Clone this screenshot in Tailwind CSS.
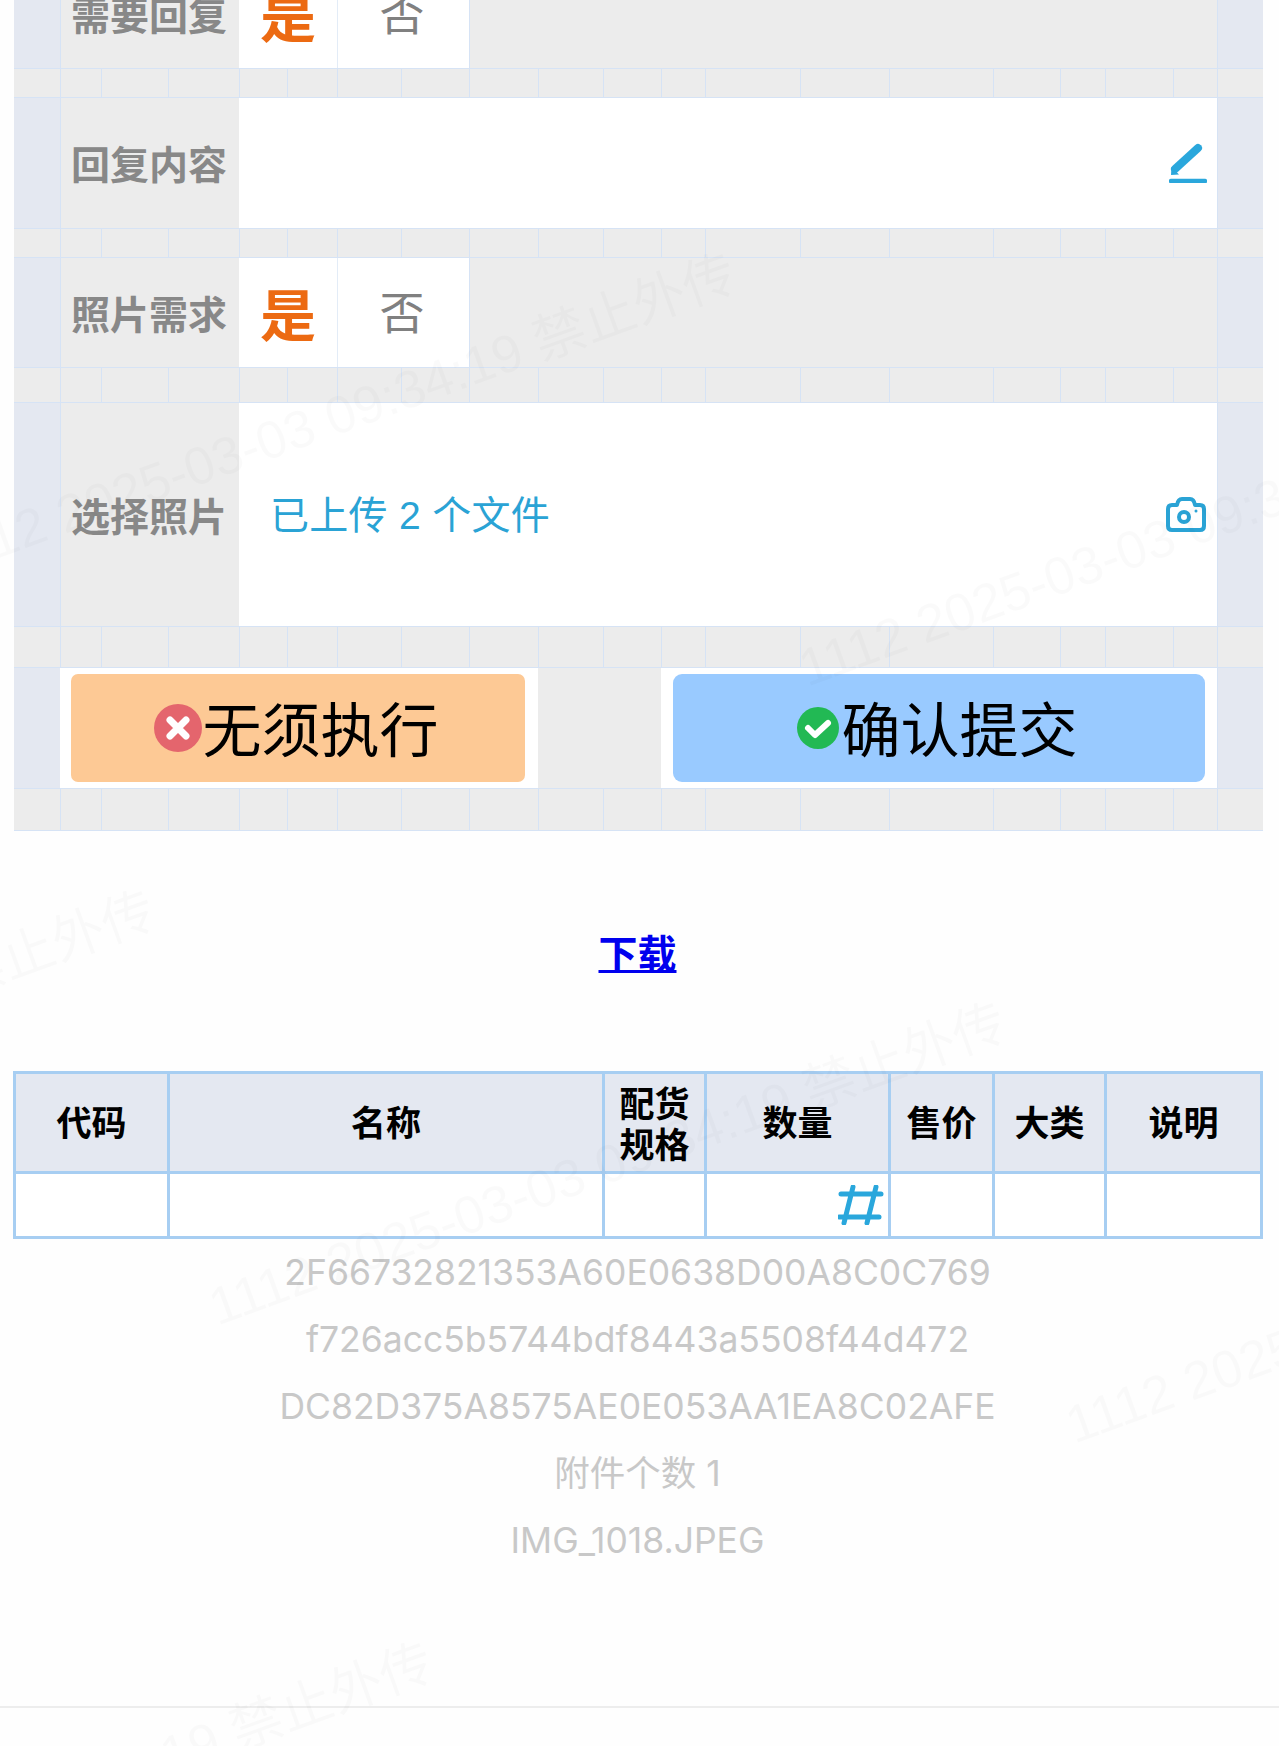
<!DOCTYPE html>
<html lang="zh-CN">
<head>
<meta charset="utf-8">
<title>表单</title>
<script src="https://cdn.jsdelivr.net/npm/@tailwindcss/browser@4"></script>
</head>
<body class="bg-[#fefefe] font-['Liberation_Sans','Noto_Sans_CJK_SC',sans-serif]">
<div class="relative w-[1279px] h-[1746px] overflow-hidden">

  <!-- form grid -->
  <div class="ml-[14px] -mt-[41px] w-[1249px] grid grid-cols-[46px_41px_67px_71px_48px_50px_64px_68px_69px_65px_58px_44px_95px_89px_104px_67px_45px_68px_44px_46px] grid-rows-[109px_30px_130px_30px_109px_36px_223px_42px_120px_43px]">

    <!-- row: 需要回复 -->
    <div class="bg-[#e4e8f1]"></div>
    <div class="col-span-3 bg-[#ececec] border-l border-[#d6e3f5] flex items-center justify-center pt-[7px] pr-[2px] text-[39px] font-bold text-[#888888]">需要回复</div>
    <div class="col-span-2 bg-white flex items-center justify-center pt-[8px] text-[56px] font-bold text-[#ec6a12]">是</div>
    <div class="col-span-2 bg-white border-l border-[#e3ecf7] flex items-center justify-center pt-[4px] pr-[3px] text-[45px] text-[#808080]">否</div>
    <div class="col-span-11 bg-[#ececec] border-l border-[#d6e3f5]"></div>
    <div class="bg-[#e4e8f1] border-l border-[#d6e3f5]"></div>

    <!-- spacer row -->
    <div class="bg-[#ececec] border-y border-[#d6e3f5]"></div>
    <div class="bg-[#ececec] border-y border-l border-[#d6e3f5]"></div>
    <div class="bg-[#ececec] border-y border-l border-[#d6e3f5]"></div>
    <div class="bg-[#ececec] border-y border-l border-[#d6e3f5]"></div>
    <div class="bg-[#ececec] border-y border-l border-[#d6e3f5]"></div>
    <div class="bg-[#ececec] border-y border-l border-[#d6e3f5]"></div>
    <div class="bg-[#ececec] border-y border-l border-[#d6e3f5]"></div>
    <div class="bg-[#ececec] border-y border-l border-[#d6e3f5]"></div>
    <div class="bg-[#ececec] border-y border-l border-[#d6e3f5]"></div>
    <div class="bg-[#ececec] border-y border-l border-[#d6e3f5]"></div>
    <div class="bg-[#ececec] border-y border-l border-[#d6e3f5]"></div>
    <div class="bg-[#ececec] border-y border-l border-[#d6e3f5]"></div>
    <div class="bg-[#ececec] border-y border-l border-[#d6e3f5]"></div>
    <div class="bg-[#ececec] border-y border-l border-[#d6e3f5]"></div>
    <div class="bg-[#ececec] border-y border-l border-[#d6e3f5]"></div>
    <div class="bg-[#ececec] border-y border-l border-[#d6e3f5]"></div>
    <div class="bg-[#ececec] border-y border-l border-[#d6e3f5]"></div>
    <div class="bg-[#ececec] border-y border-l border-[#d6e3f5]"></div>
    <div class="bg-[#ececec] border-y border-l border-[#d6e3f5]"></div>
    <div class="bg-[#ececec] border-y border-l border-[#d6e3f5]"></div>

    <!-- row: 回复内容 -->
    <div class="bg-[#e4e8f1]"></div>
    <div class="col-span-3 bg-[#ececec] border-l border-[#d6e3f5] flex items-center justify-center pt-[7px] pr-[2px] text-[39px] font-bold text-[#888888]">回复内容</div>
    <div class="col-span-15 bg-white flex items-center justify-end pr-[10px]">
      <svg class="w-[38px] h-[40px]" viewBox="0 0 38 40" fill="none">
        <path d="M29 5L6 26" stroke="#2aa7dc" stroke-width="8" stroke-linecap="round"/>
        <path d="M2.500 24L10 31.500L2 32Z" fill="#2aa7dc"/>
        <path d="M2 38H36" stroke="#2aa7dc" stroke-width="4.500" stroke-linecap="round"/>
      </svg>
    </div>
    <div class="bg-[#e4e8f1] border-l border-[#d6e3f5]"></div>

    <!-- spacer row -->
    <div class="bg-[#ececec] border-y border-[#d6e3f5]"></div>
    <div class="bg-[#ececec] border-y border-l border-[#d6e3f5]"></div>
    <div class="bg-[#ececec] border-y border-l border-[#d6e3f5]"></div>
    <div class="bg-[#ececec] border-y border-l border-[#d6e3f5]"></div>
    <div class="bg-[#ececec] border-y border-l border-[#d6e3f5]"></div>
    <div class="bg-[#ececec] border-y border-l border-[#d6e3f5]"></div>
    <div class="bg-[#ececec] border-y border-l border-[#d6e3f5]"></div>
    <div class="bg-[#ececec] border-y border-l border-[#d6e3f5]"></div>
    <div class="bg-[#ececec] border-y border-l border-[#d6e3f5]"></div>
    <div class="bg-[#ececec] border-y border-l border-[#d6e3f5]"></div>
    <div class="bg-[#ececec] border-y border-l border-[#d6e3f5]"></div>
    <div class="bg-[#ececec] border-y border-l border-[#d6e3f5]"></div>
    <div class="bg-[#ececec] border-y border-l border-[#d6e3f5]"></div>
    <div class="bg-[#ececec] border-y border-l border-[#d6e3f5]"></div>
    <div class="bg-[#ececec] border-y border-l border-[#d6e3f5]"></div>
    <div class="bg-[#ececec] border-y border-l border-[#d6e3f5]"></div>
    <div class="bg-[#ececec] border-y border-l border-[#d6e3f5]"></div>
    <div class="bg-[#ececec] border-y border-l border-[#d6e3f5]"></div>
    <div class="bg-[#ececec] border-y border-l border-[#d6e3f5]"></div>
    <div class="bg-[#ececec] border-y border-l border-[#d6e3f5]"></div>

    <!-- row: 照片需求 -->
    <div class="bg-[#e4e8f1]"></div>
    <div class="col-span-3 bg-[#ececec] border-l border-[#d6e3f5] flex items-center justify-center pt-[7px] pr-[2px] text-[39px] font-bold text-[#888888]">照片需求</div>
    <div class="col-span-2 bg-white flex items-center justify-center pt-[8px] text-[56px] font-bold text-[#ec6a12]">是</div>
    <div class="col-span-2 bg-white border-l border-[#e3ecf7] flex items-center justify-center pt-[4px] pr-[3px] text-[45px] text-[#808080]">否</div>
    <div class="col-span-11 bg-[#ececec] border-l border-[#d6e3f5]"></div>
    <div class="bg-[#e4e8f1] border-l border-[#d6e3f5]"></div>

    <!-- spacer row -->
    <div class="bg-[#ececec] border-y border-[#d6e3f5]"></div>
    <div class="bg-[#ececec] border-y border-l border-[#d6e3f5]"></div>
    <div class="bg-[#ececec] border-y border-l border-[#d6e3f5]"></div>
    <div class="bg-[#ececec] border-y border-l border-[#d6e3f5]"></div>
    <div class="bg-[#ececec] border-y border-l border-[#d6e3f5]"></div>
    <div class="bg-[#ececec] border-y border-l border-[#d6e3f5]"></div>
    <div class="bg-[#ececec] border-y border-l border-[#d6e3f5]"></div>
    <div class="bg-[#ececec] border-y border-l border-[#d6e3f5]"></div>
    <div class="bg-[#ececec] border-y border-l border-[#d6e3f5]"></div>
    <div class="bg-[#ececec] border-y border-l border-[#d6e3f5]"></div>
    <div class="bg-[#ececec] border-y border-l border-[#d6e3f5]"></div>
    <div class="bg-[#ececec] border-y border-l border-[#d6e3f5]"></div>
    <div class="bg-[#ececec] border-y border-l border-[#d6e3f5]"></div>
    <div class="bg-[#ececec] border-y border-l border-[#d6e3f5]"></div>
    <div class="bg-[#ececec] border-y border-l border-[#d6e3f5]"></div>
    <div class="bg-[#ececec] border-y border-l border-[#d6e3f5]"></div>
    <div class="bg-[#ececec] border-y border-l border-[#d6e3f5]"></div>
    <div class="bg-[#ececec] border-y border-l border-[#d6e3f5]"></div>
    <div class="bg-[#ececec] border-y border-l border-[#d6e3f5]"></div>
    <div class="bg-[#ececec] border-y border-l border-[#d6e3f5]"></div>

    <!-- row: 选择照片 -->
    <div class="bg-[#e4e8f1]"></div>
    <div class="col-span-3 bg-[#ececec] border-l border-[#d6e3f5] flex items-center justify-center pt-[7px] pr-[2px] text-[39px] font-bold text-[#888888]">选择照片</div>
    <div class="col-span-15 bg-white flex items-center justify-between pl-[31px] pr-[11px]">
      <span class="pt-[4px] text-[39px] tracking-[0.3px] text-[#2aa3d5]">已上传 2 个文件</span>
      <svg class="w-[40px] h-[35px]" viewBox="0 0 40 35" fill="none" stroke="#2aa3d5" stroke-width="4">
        <path d="M6 8h5q1-6 5-6h8q4 0 5 6h5q4 0 4 4v17q0 4-4 4H6q-4 0-4-4V12q0-4 4-4z" stroke-linejoin="round"/>
        <circle cx="18" cy="20" r="5"/>
        <circle cx="30" cy="14" r="1.500" fill="#2aa3d5" stroke="none"/>
      </svg>
    </div>
    <div class="bg-[#e4e8f1] border-l border-[#d6e3f5]"></div>

    <!-- spacer row -->
    <div class="bg-[#ececec] border-y border-[#d6e3f5]"></div>
    <div class="bg-[#ececec] border-y border-l border-[#d6e3f5]"></div>
    <div class="bg-[#ececec] border-y border-l border-[#d6e3f5]"></div>
    <div class="bg-[#ececec] border-y border-l border-[#d6e3f5]"></div>
    <div class="bg-[#ececec] border-y border-l border-[#d6e3f5]"></div>
    <div class="bg-[#ececec] border-y border-l border-[#d6e3f5]"></div>
    <div class="bg-[#ececec] border-y border-l border-[#d6e3f5]"></div>
    <div class="bg-[#ececec] border-y border-l border-[#d6e3f5]"></div>
    <div class="bg-[#ececec] border-y border-l border-[#d6e3f5]"></div>
    <div class="bg-[#ececec] border-y border-l border-[#d6e3f5]"></div>
    <div class="bg-[#ececec] border-y border-l border-[#d6e3f5]"></div>
    <div class="bg-[#ececec] border-y border-l border-[#d6e3f5]"></div>
    <div class="bg-[#ececec] border-y border-l border-[#d6e3f5]"></div>
    <div class="bg-[#ececec] border-y border-l border-[#d6e3f5]"></div>
    <div class="bg-[#ececec] border-y border-l border-[#d6e3f5]"></div>
    <div class="bg-[#ececec] border-y border-l border-[#d6e3f5]"></div>
    <div class="bg-[#ececec] border-y border-l border-[#d6e3f5]"></div>
    <div class="bg-[#ececec] border-y border-l border-[#d6e3f5]"></div>
    <div class="bg-[#ececec] border-y border-l border-[#d6e3f5]"></div>
    <div class="bg-[#ececec] border-y border-l border-[#d6e3f5]"></div>

    <!-- row: buttons -->
    <div class="bg-[#e4e8f1]"></div>
    <div class="col-span-8 bg-white pl-[11px] pr-[13px] py-[6px]">
      <button class="w-full h-full bg-[#fdc995] rounded-[7px] flex items-center justify-center pr-[3px] text-[59px] text-black">
        <svg class="w-[48px] h-[48px] shrink-0" viewBox="0 0 48 48">
          <circle cx="24" cy="24" r="24" fill="#e4656d"/>
          <path d="M16 16L32 32M32 16L16 32" stroke="#fff" stroke-width="7" stroke-linecap="round"/>
        </svg>
        <span class="pt-[8px]">无须执行</span>
      </button>
    </div>
    <div class="col-span-2 bg-[#ececec]"></div>
    <div class="col-span-8 bg-white px-[12px] py-[6px]">
      <button class="w-full h-full bg-[#99caff] rounded-[9px] flex items-center justify-center pr-[3px] text-[59px] text-black">
        <svg class="w-[42px] h-[42px] shrink-0 mr-[2px]" viewBox="0 0 42 42">
          <circle cx="21" cy="21" r="21" fill="#22b954"/>
          <path d="M11 21L18 28L31 16" fill="none" stroke="#fff" stroke-width="6" stroke-linecap="round" stroke-linejoin="round"/>
        </svg>
        <span class="pt-[8px]">确认提交</span>
      </button>
    </div>
    <div class="bg-[#e4e8f1] border-l border-[#d6e3f5]"></div>

    <!-- bottom row -->
    <div class="bg-[#ececec] border-y border-[#d6e3f5]"></div>
    <div class="bg-[#ececec] border-y border-l border-[#d6e3f5]"></div>
    <div class="bg-[#ececec] border-y border-l border-[#d6e3f5]"></div>
    <div class="bg-[#ececec] border-y border-l border-[#d6e3f5]"></div>
    <div class="bg-[#ececec] border-y border-l border-[#d6e3f5]"></div>
    <div class="bg-[#ececec] border-y border-l border-[#d6e3f5]"></div>
    <div class="bg-[#ececec] border-y border-l border-[#d6e3f5]"></div>
    <div class="bg-[#ececec] border-y border-l border-[#d6e3f5]"></div>
    <div class="bg-[#ececec] border-y border-l border-[#d6e3f5]"></div>
    <div class="bg-[#ececec] border-y border-l border-[#d6e3f5]"></div>
    <div class="bg-[#ececec] border-y border-l border-[#d6e3f5]"></div>
    <div class="bg-[#ececec] border-y border-l border-[#d6e3f5]"></div>
    <div class="bg-[#ececec] border-y border-l border-[#d6e3f5]"></div>
    <div class="bg-[#ececec] border-y border-l border-[#d6e3f5]"></div>
    <div class="bg-[#ececec] border-y border-l border-[#d6e3f5]"></div>
    <div class="bg-[#ececec] border-y border-l border-[#d6e3f5]"></div>
    <div class="bg-[#ececec] border-y border-l border-[#d6e3f5]"></div>
    <div class="bg-[#ececec] border-y border-l border-[#d6e3f5]"></div>
    <div class="bg-[#ececec] border-y border-l border-[#d6e3f5]"></div>
    <div class="bg-[#ececec] border-y border-l border-[#d6e3f5]"></div>
  </div>

  <!-- download link -->
  <div class="h-[240px] flex items-center justify-center pt-[8px] pr-[4px]">
    <a href="#" class="text-[39px] font-bold text-[#0000ee] underline">下载</a>
  </div>

  <!-- goods table -->
  <table class="ml-[13px] w-[1247px] table-fixed border-collapse text-[35px] font-bold text-black text-center">
    <colgroup>
      <col class="w-[154px]"><col class="w-[435px]"><col class="w-[102px]"><col class="w-[184px]"><col class="w-[104px]"><col class="w-[112px]"><col class="w-[156px]">
    </colgroup>
    <thead>
      <tr class="h-[100px] bg-[#e4e8f1]">
        <th class="border-[3px] border-[#a7cef2] pt-[4px] font-bold">代码</th>
        <th class="border-[3px] border-[#a7cef2] pt-[4px] font-bold">名称</th>
        <th class="border-[3px] border-[#a7cef2] pt-[4px] font-bold leading-[41px]">配货<br>规格</th>
        <th class="border-[3px] border-[#a7cef2] pt-[4px] font-bold">数量</th>
        <th class="border-[3px] border-[#a7cef2] pt-[4px] font-bold">售价</th>
        <th class="border-[3px] border-[#a7cef2] pt-[4px] font-bold">大类</th>
        <th class="border-[3px] border-[#a7cef2] pt-[4px] font-bold">说明</th>
      </tr>
    </thead>
    <tbody>
      <tr class="h-[65px] bg-white">
        <td class="border-[3px] border-[#a7cef2]"></td>
        <td class="border-[3px] border-[#a7cef2]"></td>
        <td class="border-[3px] border-[#a7cef2]"></td>
        <td class="border-[3px] border-[#a7cef2]">
          <div class="flex justify-end pr-[4px]">
            <svg class="w-[46px] h-[40px]" viewBox="0 0 46 40" fill="none" stroke="#2aa7dc" stroke-width="5" stroke-linecap="round">
              <path d="M3 9H43M1 32H41M15 2L6 38M38 2L29 38"/>
            </svg>
          </div>
        </td>
        <td class="border-[3px] border-[#a7cef2]"></td>
        <td class="border-[3px] border-[#a7cef2]"></td>
        <td class="border-[3px] border-[#a7cef2]"></td>
      </tr>
    </tbody>
  </table>

  <!-- ids -->
  <div class="pr-[4px] flex flex-col items-center font-['Inter','Noto_Sans_CJK_SC',sans-serif] text-[35.500px] leading-[67px] text-[#c8c8c8]">
    <p>2F66732821353A60E0638D00A8C0C769</p>
    <p>f726acc5b5744bdf8443a5508f44d472</p>
    <p>DC82D375A8575AE0E053AA1EA8C02AFE</p>
    <p>附件个数 1</p>
    <p>IMG_1018.JPEG</p>
  </div>

  <!-- footer divider -->
  <div class="mt-[132px] h-[2px] bg-[#ededed]"></div>

  <!-- watermark -->
  <div class="absolute inset-0 pointer-events-none text-[53px] whitespace-nowrap text-black/[0.02]">
    <span class="absolute left-[-59px] top-[520px] origin-left -rotate-[20deg]">1112 2025-03-03 09:34:19 禁止外传</span>
    <span class="absolute left-[801px] top-[630px] origin-left -rotate-[20deg]">1112 2025-03-03 09:34:19 禁止外传</span>
    <span class="absolute left-[-640px] top-[1157px] origin-left -rotate-[20deg]">1112 2025-03-03 09:34:19 禁止外传</span>
    <span class="absolute left-[211px] top-[1269px] origin-left -rotate-[20deg]">1112 2025-03-03 09:34:19 禁止外传</span>
    <span class="absolute left-[1068px] top-[1387px] origin-left -rotate-[20deg]">1112 2025-03-03 09:34:19 禁止外传</span>
    <span class="absolute left-[-362px] top-[1909px] origin-left -rotate-[20deg]">1112 2025-03-03 09:34:19 禁止外传</span>
  </div>
</div>
</body>
</html>
